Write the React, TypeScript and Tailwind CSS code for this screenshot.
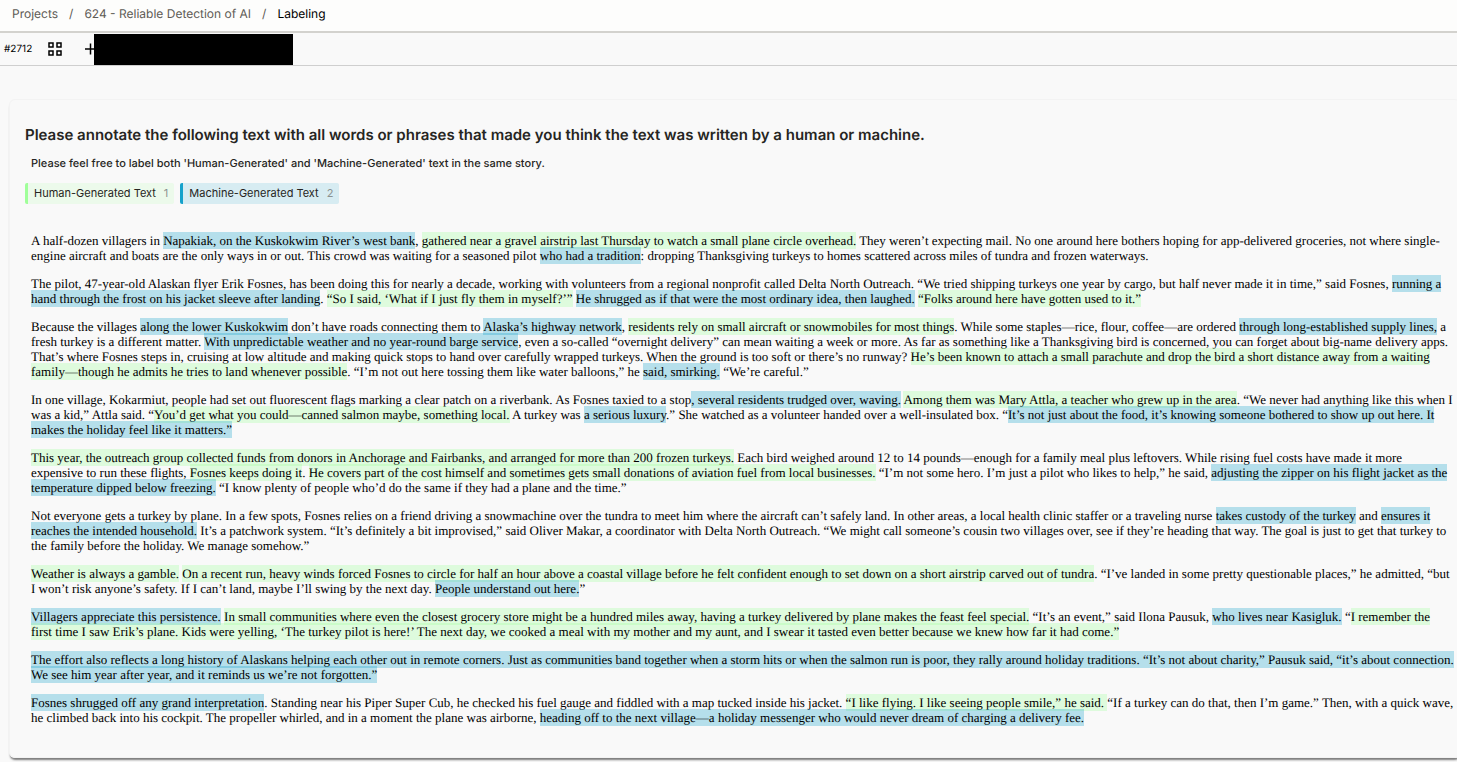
import { Fragment } from "react";

type Tone = "human" | "machine";
type Segment = string | [Tone, string];

const toneClass: Record<Tone, string> = {
  human: "bg-[#a0ff9a]/30",
  machine: "bg-[#16a2cb]/30",
};

const labels = [
  { name: "Human-Generated Text", hotkey: 1, className: "border-[#a0ff9a] bg-[#a0ff9a]/15" },
  { name: "Machine-Generated Text", hotkey: 2, className: "border-[#16a2cb] bg-[#16a2cb]/15" },
];

const story: Segment[][] = [
  [
    "A half-dozen villagers in ",
    ["machine", "Napakiak, on the Kuskokwim River’s west bank"],
    ", ",
    ["human", "gathered near a gravel airstrip last Thursday to watch a small plane circle overhead."],
    " They weren’t expecting mail. No one around here bothers hoping for app-delivered groceries, not where single-engine aircraft and boats are the only ways in or out. This crowd was waiting for a seasoned pilot ",
    ["machine", "who had a tradition"],
    ": dropping Thanksgiving turkeys to homes scattered across miles of tundra and frozen waterways.",
  ],
  [
    "The pilot, 47-year-old Alaskan flyer Erik Fosnes, has been doing this for nearly a decade, working with volunteers from a regional nonprofit called Delta North Outreach. “We tried shipping turkeys one year by cargo, but half never made it in time,” said Fosnes, ",
    ["machine", "running a hand through the frost on his jacket sleeve after landing"],
    ". ",
    ["human", "“So I said, ‘What if I just fly them in myself?’”"],
    " ",
    ["machine", "He shrugged as if that were the most ordinary idea, then laughed."],
    " ",
    ["human", "“Folks around here have gotten used to it.”"],
  ],
  [
    "Because the villages ",
    ["machine", "along the lower Kuskokwim"],
    " don’t have roads connecting them to ",
    ["machine", "Alaska’s highway network"],
    ", ",
    ["human", "residents rely on small aircraft or snowmobiles for most things"],
    ". While some staples—rice, flour, coffee—are ordered ",
    ["machine", "through long-established supply lines,"],
    " a fresh turkey is a different matter. ",
    ["machine", "With unpredictable weather and no year-round barge service"],
    ", even a so-called “overnight delivery” can mean waiting a week or more. As far as something like a Thanksgiving bird is concerned, you can forget about big-name delivery apps. That’s where Fosnes steps in, cruising at low altitude and making quick stops to hand over carefully wrapped turkeys. When the ground is too soft or there’s no runway? ",
    ["human", "He’s been known to attach a small parachute and drop the bird a short distance away from a waiting family—though he admits he tries to land whenever possible"],
    ". “I’m not out here tossing them like water balloons,” he ",
    ["machine", "said, smirking."],
    " “We’re careful.”",
  ],
  [
    "In one village, Kokarmiut, people had set out fluorescent flags marking a clear patch on a riverbank. As Fosnes taxied to a stop",
    ["machine", ", several residents trudged over, waving."],
    " ",
    ["human", "Among them was Mary Attla, a teacher who grew up in the area"],
    ". “We never had anything like this when I was a kid,” Attla said. “",
    ["human", "You’d get what you could—canned salmon maybe, something local."],
    " A turkey was ",
    ["machine", "a serious luxury"],
    ".” She watched as a volunteer handed over a well-insulated box. “",
    ["machine", "It’s not just about the food, it’s knowing someone bothered to show up out here. It makes the holiday feel like it matters.”"],
  ],
  [
    ["human", "This year, the outreach group collected funds from donors in Anchorage and Fairbanks, and arranged for more than 200 frozen turkeys."],
    " Each bird weighed around 12 to 14 pounds—enough for a family meal plus leftovers. While rising fuel costs have made it more expensive to run these flights, ",
    ["human", "Fosnes keeps doing it"],
    ". ",
    ["human", "He covers part of the cost himself and sometimes gets small donations of aviation fuel from local businesses."],
    " “I’m not some hero. I’m just a pilot who likes to help,” he said, ",
    ["machine", "adjusting the zipper on his flight jacket as the temperature dipped below freezing."],
    " “I know plenty of people who’d do the same if they had a plane and the time.”",
  ],
  [
    "Not everyone gets a turkey by plane. In a few spots, Fosnes relies on a friend driving a snowmachine over the tundra to meet him where the aircraft can’t safely land. In other areas, a local health clinic staffer or a traveling nurse ",
    ["machine", "takes custody of the turkey"],
    " and ",
    ["machine", "ensures it reaches the intended household."],
    " It’s a patchwork system. “It’s definitely a bit improvised,” said Oliver Makar, a coordinator with Delta North Outreach. “We might call someone’s cousin two villages over, see if they’re heading that way. The goal is just to get that turkey to the family before the holiday. We manage somehow.”",
  ],
  [
    ["human", "Weather is always a gamble."],
    " ",
    ["human", "On a recent run, heavy winds forced Fosnes to circle for half an hour above a coastal village before he felt confident enough to set down on a short airstrip carved out of tundra"],
    ". “I’ve landed in some pretty questionable places,” he admitted, “but I won’t risk anyone’s safety. If I can’t land, maybe I’ll swing by the next day. ",
    ["machine", "People understand out here."],
    "”",
  ],
  [
    ["machine", "Villagers appreciate this persistence."],
    " ",
    ["human", "In small communities where even the closest grocery store might be a hundred miles away, having a turkey delivered by plane makes the feast feel special."],
    " “It’s an event,” said Ilona Pausuk, ",
    ["machine", "who lives near Kasigluk."],
    " “",
    ["human", "I remember the first time I saw Erik’s plane. Kids were yelling, ‘The turkey pilot is here!’ The next day, we cooked a meal with my mother and my aunt, and I swear it tasted even better because we knew how far it had come.”"],
  ],
  [
    ["machine", "The effort also reflects a long history of Alaskans helping each other out in remote corners. Just as communities band together when a storm hits or when the salmon run is poor, they rally around holiday traditions. “It’s not about charity,” Pausuk said, “it’s about connection. We see him year after year, and it reminds us we’re not forgotten.”"],
  ],
  [
    ["machine", "Fosnes shrugged off any grand interpretation"],
    ". Standing near his Piper Super Cub, he checked his fuel gauge and fiddled with a map tucked inside his jacket. ",
    ["human", "“I like flying. I like seeing people smile,” he said. "],
    "“If a turkey can do that, then I’m game.” Then, with a quick wave, he climbed back into his cockpit. The propeller whirled, and in a moment the plane was airborne, ",
    ["machine", "heading off to the next village—a holiday messenger who would never dream of charging a delivery fee."],
  ],
];

export default function App() {
  return (
    <div className="min-h-screen overflow-x-hidden bg-[#f9f9f9] font-['Inter',sans-serif] text-[#262522] [text-rendering:geometricPrecision]">
      <header className="border-b-2 border-[#d3d2ce] bg-[#fdfdfc]">
        <nav aria-label="Breadcrumb" className="flex h-[31px] items-center gap-[11px] px-3 pb-1 text-[12px] text-[#5d5b55]">
          <a href="#projects">Projects</a>
          <span>/</span>
          <a href="#project-624">624 - Reliable Detection of AI</a>
          <span>/</span>
          <span aria-current="page" className="text-black">Labeling</span>
        </nav>
      </header>

      <div className="flex h-[33px] items-center border-b border-[#cfcfcf] pl-1 text-black">
        <span className="w-[44px] text-[10px]">#2712</span>
        <button type="button" aria-label="Show all tasks">
          <GridIcon />
        </button>
        <button type="button" aria-label="Create annotation" className="ml-[23px]">
          <PlusIcon />
        </button>
        <div className="-ml-[2px] h-[31px] w-[199px] bg-black" />
      </div>

      <main className="pt-[33px] pl-[9px]">
        <section className="-mr-1 rounded-md border border-[#f3f3f3] pt-[25px] pr-[6px] pb-8 pl-[15px] shadow-[0_3px_2px_-1px_rgba(0,0,0,0.5)]">
          <h1 className="text-[15px] leading-5 font-semibold">
            Please annotate the following text with all words or phrases that made you think the text was written by a human or machine.
          </h1>
          <h2 className="mt-[10px] pl-[6px] text-[11px] leading-4 font-medium">
            Please feel free to label both 'Human-Generated' and 'Machine-Generated' text in the same story.
          </h2>

          <div className="mt-3 flex gap-[6px]">
            {labels.map((label) => (
              <button
                key={label.name}
                type="button"
                className={`flex h-[21px] items-center gap-2 rounded-xs border-l-3 px-[6px] text-[11px] ${label.className}`}
              >
                {label.name}
                <span className="text-[#8b9290]">{label.hotkey}</span>
              </button>
            ))}
          </div>

          <article className="mt-[29px] space-y-[13px] pl-[6px] font-['Liberation_Serif',serif] text-[13px] leading-[15px] text-black">
            {story.map((segments, index) => (
              <p key={index}>
                {segments.map((segment, i) =>
                  typeof segment === "string" ? (
                    <Fragment key={i}>{segment}</Fragment>
                  ) : (
                    <mark key={i} className={`py-px text-black ${toneClass[segment[0]]}`}>
                      {segment[1]}
                    </mark>
                  ),
                )}
              </p>
            ))}
          </article>
        </section>
      </main>
    </div>
  );
}

function GridIcon() {
  return (
    <svg width="14" height="14" viewBox="0 0 14 14" fill="none" stroke="currentColor" strokeWidth="1.5">
      <rect x="1" y="1" width="4" height="4" />
      <rect x="9" y="1" width="4" height="4" />
      <rect x="1" y="9" width="4" height="4" />
      <rect x="9" y="9" width="4" height="4" />
    </svg>
  );
}

function PlusIcon() {
  return (
    <svg width="11" height="12" viewBox="0 0 11 12" fill="none" stroke="currentColor" strokeWidth="1.5">
      <path d="M5.5 0.5v11M0 6h11" />
    </svg>
  );
}
